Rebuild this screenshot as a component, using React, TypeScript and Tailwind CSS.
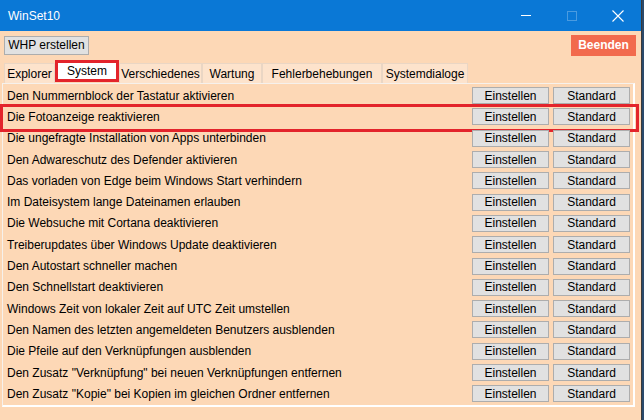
import React from "react";

const rows = [
  "Den Nummernblock der Tastatur aktivieren",
  "Die Fotoanzeige reaktivieren",
  "Die ungefragte Installation von Apps unterbinden",
  "Den Adwareschutz des Defender aktivieren",
  "Das vorladen von Edge beim Windows Start verhindern",
  "Im Dateisystem lange Dateinamen erlauben",
  "Die Websuche mit Cortana deaktivieren",
  "Treiberupdates über Windows Update deaktivieren",
  "Den Autostart schneller machen",
  "Den Schnellstart deaktivieren",
  "Windows Zeit von lokaler Zeit auf UTC Zeit umstellen",
  "Den Namen des letzten angemeldeten Benutzers ausblenden",
  "Die Pfeile auf den Verknüpfungen ausblenden",
  'Den Zusatz "Verknüpfung" bei neuen Verknüpfungen entfernen',
  'Den Zusatz "Kopie" bei Kopien im gleichen Ordner entfernen',
];

const tabs: { t: string; w: string }[] = [
  { t: "Explorer", w: "w-[51px]" },
  { t: "System", w: "w-[64px]" },
  { t: "Verschiedenes", w: "w-[83px]" },
  { t: "Wartung", w: "w-[60px]" },
  { t: "Fehlerbehebungen", w: "w-[120px]" },
  { t: "Systemdialoge", w: "w-[86px]" },
];

function Btn({ label }: { label: string }) {
  return (
    <div className="w-[77px] h-[17px] flex items-center justify-center bg-[#e1e1e1] border border-[#adadad] text-[12px] leading-none text-black">
      {label}
    </div>
  );
}

export default function App() {
  return (
    <div
      className="w-[644px] h-[420px] overflow-hidden bg-[#2b4a6b] relative"
      style={{ fontFamily: '"Liberation Sans", Arial, sans-serif' }}
    >
      <div className="w-[642px] h-[420px] bg-[#fdd8b6] flex flex-col border-r border-[#3a3a3a]">
        {/* Title bar */}
        <div className="h-[31px] bg-[#0a78d6] flex items-center text-white shrink-0">
          <span className="pl-[8px] text-[12px]">WinSet10</span>
          <div className="flex-1" />
          <div className="w-[46px] h-full flex items-center justify-center">
            <div className="w-[10px] h-[1px] bg-white" />
          </div>
          <div className="w-[46px] h-full flex items-center justify-center">
            <div className="w-[10px] h-[10px] border border-[#4a9be0]" />
          </div>
          <div className="w-[46px] h-full flex items-center justify-center">
            <svg width="12" height="12" viewBox="0 0 12 12">
              <path d="M0.5 0.5 L11.5 11.5 M11.5 0.5 L0.5 11.5" stroke="white" strokeWidth="1.1" />
            </svg>
          </div>
        </div>

        {/* Toolbar */}
        <div className="h-[28px] flex items-center justify-between pl-[4px] pr-[5px] shrink-0">
          <div className="h-[19px] w-[85px] flex items-center justify-center bg-[#e1e1e1] border border-[#adadad] text-[12px] text-black leading-none">
            WHP erstellen
          </div>
          <div className="h-[21px] w-[65px] flex items-center justify-center bg-[#f26a4d] text-white text-[12px] font-bold leading-none">
            Beenden
          </div>
        </div>

        {/* Tabs */}
        <div className="h-[24px] flex items-end pl-[4px] shrink-0 relative">
          {tabs.map(({ t, w }) => {
            const sel = t === "System";
            return sel ? (
              <div
                key={t}
                className={w + " h-[22px] flex items-center justify-center bg-white border-[3px] border-[#e3242b] text-[12px] text-black relative -top-[1px]"}
              >
                {t}
              </div>
            ) : (
              <div
                key={t}
                className={w + " h-[20px] flex items-center justify-center bg-[#fde3cc] border border-[#ead6c4] border-b-0 text-[12px] text-black"}
              >
                {t}
              </div>
            );
          })}
        </div>

        {/* Panel */}
        <div className="ml-[2px] mr-[6px] h-[324px] border border-[#f6f1ec] border-r-2 border-b-2 border-r-white border-b-white pt-[1px] shrink-0">
          {rows.map((r, i) => (
            <div
              key={r}
              className="h-[21.3px] flex items-center justify-between pl-[4px] pr-[3px] relative"
            >
              <span className="text-[12px] text-black leading-none">{r}</span>
              <div className="flex gap-[4px]">
                <Btn label="Einstellen" />
                <Btn label="Standard" />
              </div>
              {i === 1 && (
                <div className="absolute left-[-3px] right-[-6px] top-[-2px] bottom-[-4px] border-[3px] border-[#e3242b] pointer-events-none" />
              )}
            </div>
          ))}
        </div>
      </div>
    </div>
  );
}
